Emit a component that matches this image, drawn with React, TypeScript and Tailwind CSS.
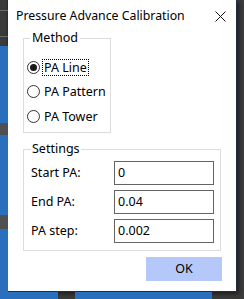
import React from "react";

const font = { fontFamily: '"Noto Sans", "Liberation Sans", sans-serif' };

const Radio = ({ label, checked, focused }: { label: string; checked?: boolean; focused?: boolean }) => (
  <div className="flex items-center h-[24.5px] whitespace-nowrap">
    <div className="w-[13px] h-[13px] shrink-0 rounded-full border border-[#333] bg-white flex items-center justify-center">
      {checked && <div className="w-[7px] h-[7px] rounded-full bg-[#1a1a1a]" />}
    </div>
    <span
      className={
        "ml-[3px] text-[12.5px] leading-[15px] text-black px-[1px] " +
        (focused ? "outline outline-1 outline-dotted outline-black" : "")
      }
    >
      {label}
    </span>
  </div>
);

const Field = ({ label, value }: { label: string; value: string }) => (
  <div className="flex items-center h-[24px]">
    <span className="w-[83px] text-[12.5px] text-black">{label}</span>
    <div className="w-[100px] h-[24px] border border-[#646464] bg-white flex items-center px-[3px] text-[12.5px] text-black">
      {value}
    </div>
  </div>
);

export default function App() {
  return (
    <div className="w-[244px] h-[299px] relative overflow-hidden bg-[#3b3b3b]" style={font}>
      {/* app canvas behind the dialog */}
      <div className="absolute left-0 top-[46px] w-[8px] h-[253px] bg-[#2a6fbd]" />
      <div className="absolute left-0 top-[123px] w-[8px] h-[12px] bg-[#505050]" />
      <div className="absolute left-0 top-[215px] w-[8px] h-[14px] bg-[#505050]" />
      <div className="absolute left-0 top-[292px] w-[58px] h-[7px] bg-[#2a6fbd]" />
      <div className="absolute left-[75px] top-[292px] w-[137px] h-[7px] bg-[#2a6fbd]" />
      <div className="absolute left-0 top-[10px] w-[8px] h-[1px] bg-[#6a6a6a]" />
      <div className="absolute left-0 top-[36px] w-[8px] h-[1px] bg-[#6a6a6a]" />

      <div className="ml-[7px] w-[230px] h-[292px] bg-white border border-t-0 border-[#1f2f40] flex flex-col shadow-[2px_2px_4px_rgba(0,0,0,0.5)]">
        <div className="flex items-center justify-between h-[32px] pl-[8px] pr-[10px]">
          <span className="text-[12.3px] text-black">Pressure Advance Calibration</span>
          <svg width="11" height="11" viewBox="0 0 11 11">
            <path d="M0.5 0.5L10.5 10.5M10.5 0.5L0.5 10.5" stroke="#111" strokeWidth="1" />
          </svg>
        </div>

        <fieldset className="ml-[15px] mt-[-1px] w-[88px] h-[102px] border border-[#dcdcdc] px-[3px] overflow-visible">
          <legend className="ml-[3px] px-[2px] text-[12.5px] leading-[14px] text-black">Method</legend>
          <div className="flex flex-col pt-[10px]">
            <Radio label="PA Line" checked focused />
            <Radio label="PA Pattern" />
            <Radio label="PA Tower" />
          </div>
        </fieldset>

        <fieldset className="ml-[15px] mt-[9px] w-[198px] h-[109px] border border-[#dcdcdc] pl-[7px]">
          <legend className="px-[1px] text-[12.5px] leading-[14px] text-black">Settings</legend>
          <div className="flex flex-col gap-[5px] pt-[5px]">
            <Field label="Start PA:" value="0" />
            <Field label="End PA:" value="0.04" />
            <Field label="PA step:" value="0.002" />
          </div>
        </fieldset>

        <div className="flex justify-end pr-[14px] mt-[6px]">
          <div className="w-[76px] h-[24px] bg-[#b4c9f9] flex items-center justify-center text-[12.5px] text-black">
            OK
          </div>
        </div>
      </div>
    </div>
  );
}
